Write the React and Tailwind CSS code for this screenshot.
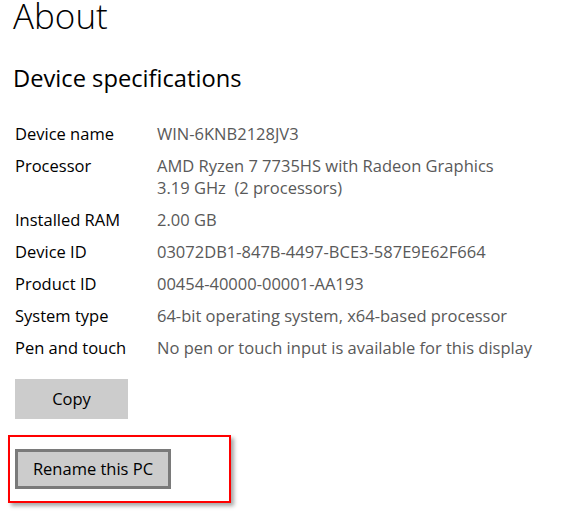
import React from "react";

const specs = [
  { label: "Device name", value: ["WIN-6KNB2128JV3"] },
  {
    label: "Processor",
    value: ["AMD Ryzen 7 7735HS with Radeon Graphics", "3.19 GHz  (2 processors)"],
  },
  { label: "Installed RAM", value: ["2.00 GB"] },
  { label: "Device ID", value: ["03072DB1-847B-4497-BCE3-587E9E62F664"] },
  { label: "Product ID", value: ["00454-40000-00001-AA193"] },
  { label: "System type", value: ["64-bit operating system, x64-based processor"] },
  { label: "Pen and touch", value: ["No pen or touch input is available for this display"] },
];

const App = () => {
  return (
    <div className="w-[574px] h-[512px] overflow-hidden bg-white font-['Open_Sans',sans-serif] text-black">
      <h1 className="pt-[1px] pl-[13px] text-[35px] font-light leading-[29px]">About</h1>

      <h2 className="mt-[32px] pl-[13px] text-[23.7px] font-normal leading-[32px]">
        Device specifications
      </h2>

      {/* Spec table */}
      <div className="mt-[29px] pl-[15px] grid grid-cols-[142px_1fr] gap-y-[10px] text-[16.5px] leading-[22px]">
        {specs.map((row) => (
          <React.Fragment key={row.label}>
            <div className="text-black">{row.label}</div>
            <div className="text-[#595959] whitespace-pre">
              {row.value.map((line) => (
                <div key={line}>{line}</div>
              ))}
            </div>
          </React.Fragment>
        ))}
      </div>

      <div className="mt-[20px] pl-[15px]">
        <button className="w-[113px] h-[40px] bg-[#cccccc] text-[16.5px] text-black">
          Copy
        </button>
      </div>

      {/* Highlighted rename action */}
      <div className="mt-[16px] ml-[8px] w-[223px] h-[68px] border-2 border-[#ff0000] shadow-[3px_3px_4px_rgba(0,0,0,0.35)] pl-[5px] pt-[12px]">
        <button className="w-[156px] h-[40px] bg-[#cccccc] border-[3px] border-[#7a7a7a] text-[16.5px] text-black">
          Rename this PC
        </button>
      </div>
    </div>
  );
};

export default App;
